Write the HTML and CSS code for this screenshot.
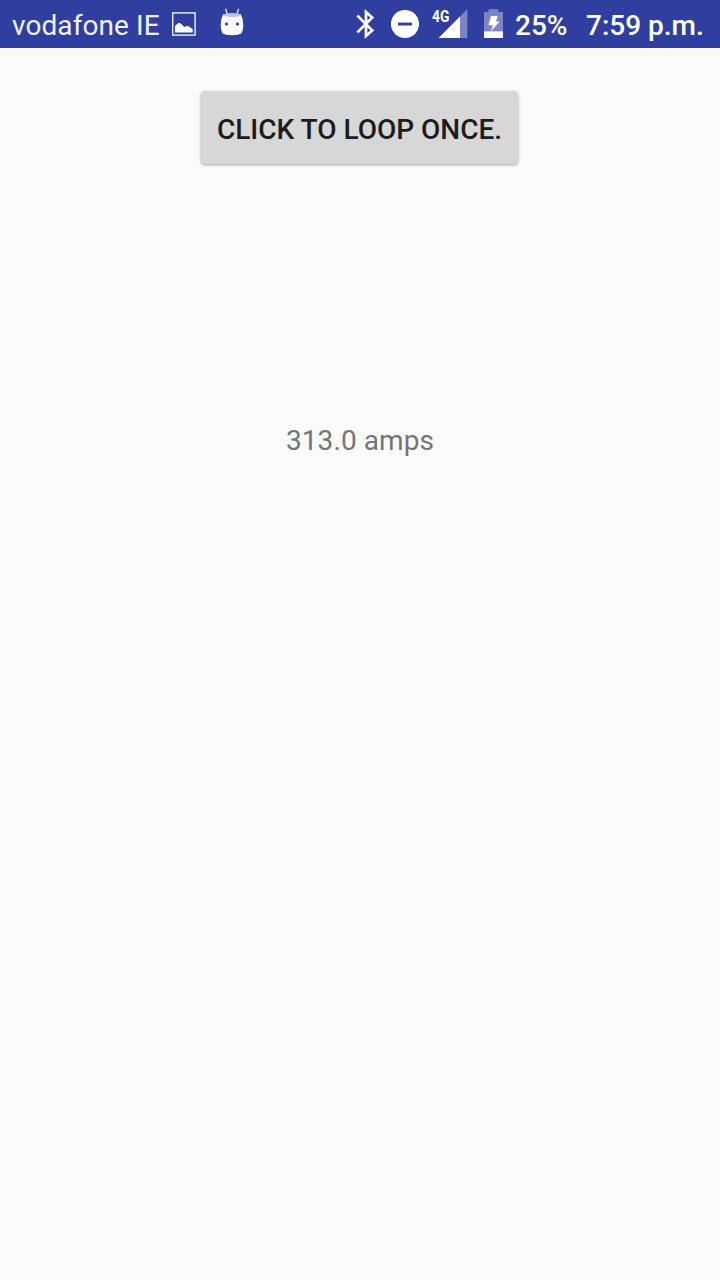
FILE: index.html
```html
<!DOCTYPE html>
<html lang="en">
<head>
<meta charset="utf-8">
<title>Loop</title>
<link rel="stylesheet" href="styles.css">
</head>
<body>
<header class="status-bar">
  <div class="notifications">
    <span class="carrier">vodafone IE</span>
    <svg class="icon-picture" width="24" height="48" viewBox="172 0 24 48" aria-hidden="true">
      <rect x="172.7" y="12.9" width="22.4" height="22.2" fill="none" stroke="#e2e4f8" stroke-width="1.5"/>
      <path d="M175 32.6V26l2.6-2.6 2-.6 2.5 1.9 2.2 2.4 2.6-1.1 2.4.5 1.5 1.6 1.9.9v3.6z" fill="#fff"/>
    </svg>
    <svg class="icon-android" width="24" height="48" viewBox="220 0 24 48" aria-hidden="true">
      <path d="M225.6 8.8l1.6 5M238.6 8.8l-1.4 5" stroke="#e2e4f8" stroke-width="1.4" fill="none"/>
      <path d="M223.2 14.2q8.8-1.6 17.6 0 2.5 4.4 2.5 10.8 0 5-1.4 7.6-1.5 2.7-9.9 2.7t-9.9-2.7q-1.4-2.6-1.4-7.6 0-6.4 2.5-10.8z" fill="#f8f9ff"/>
      <path d="M223.2 14.2q8.8-1.8 17.6 0l.4 1.2q-9.2 3.2-18.4 0z" fill="#bcc1e8"/>
      <circle cx="226.5" cy="24" r="1.6" fill="#303f9f"/>
      <circle cx="237.5" cy="24" r="1.6" fill="#303f9f"/>
    </svg>
  </div>
  <div class="system">
    <svg class="icon-bluetooth" width="22" height="48" viewBox="355 0 22 48" aria-hidden="true">
      <path d="M357.4 15.6L372.2 30.4l-6.2 5.6V12l6.2 5.6-14.8 14.8" fill="none" stroke="#fff" stroke-width="2.7"/>
    </svg>
    <svg class="icon-dnd" width="28" height="48" viewBox="391 0 28 48" aria-hidden="true">
      <circle cx="405" cy="24" r="14.1" fill="#fff"/>
      <rect x="398" y="22.6" width="14" height="2.9" fill="#303f9f"/>
    </svg>
    <div class="mobile">
      <svg width="36" height="48" viewBox="432 0 36 48" aria-hidden="true">
        <path d="M467.3 9.3V38H438.6z" fill="#7c86c6"/>
        <path d="M460 16.6V38H438.6z" fill="#fff"/>
      </svg>
      <span class="network">4G</span>
    </div>
    <svg class="icon-battery" width="20" height="48" viewBox="484 0 20 48" aria-hidden="true">
      <path d="M484 12h4.6V9.2h9.6V12h4.8v20h-19z" fill="#7c86c6"/>
      <path d="M484 31.4h19V38h-19z" fill="#fff"/>
      <path d="M491 16h6.6l-1.6 5.6h3.6l-8.8 9.8 2-6.2h-4.4z" fill="#fff"/>
    </svg>
    <span class="percent">25%</span>
    <span class="clock">7:59 p.m.</span>
  </div>
</header>
<main class="content">
  <button class="loop-button" type="button">CLICK TO LOOP ONCE.</button>
  <p class="reading">313.0 amps</p>
</main>
</body>
</html>
```
FILE: styles.css
```css
* {
  box-sizing: border-box;
}

body {
  margin: 0;
  min-height: 1280px;
  background: #fafafa;
  font-family: Roboto, sans-serif;
  font-size: 28px;
  line-height: 33px;
}

svg {
  display: block;
  flex: none;
}

.status-bar {
  display: flex;
  justify-content: space-between;
  height: 48px;
  background: #303f9f;
  color: #fff;
  white-space: nowrap;
}

.notifications,
.system {
  display: flex;
  align-items: center;
}

.notifications {
  padding-left: 12px;
}

.carrier {
  width: 160px;
  padding-top: 2px;
  color: #f0f1ff;
  letter-spacing: 0.08px;
}

.icon-android {
  margin-left: 24px;
}

.icon-dnd {
  margin-left: 14px;
}

.mobile {
  position: relative;
  margin-left: 13px;
}

.network {
  position: absolute;
  top: 7px;
  left: 0;
  font-size: 17px;
  font-weight: 700;
  line-height: 18px;
  transform: scaleX(0.81);
  transform-origin: left;
}

.icon-battery {
  margin-left: 16px;
}

.percent,
.clock {
  padding-top: 2px;
  font-weight: 500;
}

.percent {
  width: 71px;
  margin-left: 11px;
}

.clock {
  width: 134px;
}

.content {
  display: flex;
  flex-direction: column;
  align-items: center;
  padding-top: 43px;
}

.loop-button {
  width: 317px;
  height: 73px;
  margin-right: 1px;
  padding: 4px 0 0;
  border: 0;
  border-radius: 4px;
  background: #d7d7d7;
  box-shadow: 0 1px 3px rgba(0, 0, 0, 0.35);
  color: #1c1c1c;
  font: 500 28px/33px Roboto, sans-serif;
  white-space: nowrap;
}

.reading {
  margin: 260px 0 0;
  color: #757575;
  letter-spacing: 0.08px;
}
```
